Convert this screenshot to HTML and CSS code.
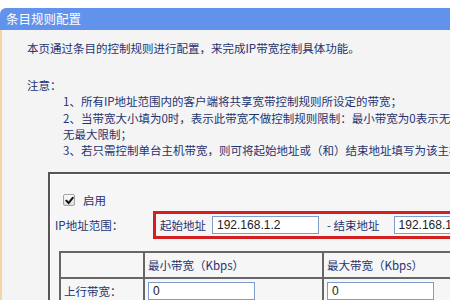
FILE: index.html
```html
<!DOCTYPE html>
<html>
    <head>
        <meta charset="utf-8">
        <meta name="viewport" content="width=device-width, initial-scale=1">
        <link rel="stylesheet" href="styles.css">
    </head>
    <body>
        <div class="panel">
            <div class="titulo">条目规则配置</div>
            <div class="contenido">
                <p class="intro">本页通过条目的控制规则进行配置，来完成IP带宽控制具体功能。</p>
                <p class="notaTitulo">注意：</p>
                <div class="notas">
                    <div>1、所有IP地址范围内的客户端将共享宽带控制规则所设定的带宽；</div>
                    <div>2、当带宽大小填为0时，表示此带宽不做控制规则限制：最小带宽为0表示无最小限制，最大带宽为0表示</div>
                    <div>无最大限制；</div>
                    <div>3、若只需控制单台主机带宽，则可将起始地址或（和）结束地址填写为该主机IP地址。</div>
                </div>

                <div class="caja">
                    <label class="habilitar">
                        <span class="check">
                            <svg width="9" height="9" viewBox="0 0 10 10">
                                <path d="M1.5 5.2 L4 7.8 L8.6 2" />
                            </svg>
                        </span>
                        <span>启用</span>
                    </label>

                    <div class="filaRango">
                        <span class="etiqueta">IP地址范围：</span>
                        <div class="rango">
                            <span>起始地址</span>
                            <input class="campo" type="text" value="192.168.1.2">
                            <span class="guion">- 结束地址</span>
                            <input class="campo" type="text" value="192.168.1.254">
                        </div>
                    </div>

                    <table class="tablaBanda">
                        <colgroup>
                            <col class="colEtiqueta">
                            <col class="colValor">
                            <col class="colValor">
                        </colgroup>
                        <tr class="cabecera">
                            <td></td>
                            <td>最小带宽（Kbps）</td>
                            <td>最大带宽（Kbps）</td>
                        </tr>
                        <tr>
                            <td>上行带宽：</td>
                            <td><input class="campo" type="text" value="0"></td>
                            <td><input class="campo" type="text" value="0"></td>
                        </tr>
                    </table>
                </div>
            </div>
        </div>
    </body>
</html>
```

FILE: styles.css
```css
html,
body {
    height  : 100%;
    margin  : 0;
    overflow: hidden;
    padding : 0;
}

body {
    background-color: #fff;
    color           : #1f3370;
    font-family     : "Noto Sans CJK SC", "Liberation Sans", sans-serif;
    font-size       : 11.5px;
}

.panel {
    margin-top: 8px;
}

.titulo {
    background-color      : #6193ed;
    border-top-left-radius: 6px;
    color                 : #fff;
    font-size             : 12.5px;
    height                : 22px;
    line-height           : 22px;
    padding-left          : 6px;
}

.contenido {
    background-color: #f4f4f4;
    border-left     : 2px solid #f2d6a4;
    height          : 270px;
    overflow        : hidden;
    padding         : 10px 0 0 25px;
    white-space     : nowrap;
}

.intro {
    line-height: 16px;
    margin     : 0 0 21px;
}

.notaTitulo {
    line-height: 16.3px;
    margin     : 0;
}

.notas {
    line-height : 16.3px;
    padding-left: 36px;
}

/* Caja del formulario */
.caja {
    background-color: #f6f6f6;
    border-left     : 2px solid #555;
    border-top      : 2px solid #555;
    box-shadow      : inset 1px 1px 0 #fff;
    margin          : 14px 0 0 21px;
    padding         : 18px 0 12px 5px;
    width           : 440px;
}

.habilitar {
    align-items: center;
    display    : flex;
    gap        : 8px;
    height     : 16px;
    margin-left: 8px;
}

.check {
    align-items     : center;
    background      : linear-gradient( #fdfdfd, #dcdcdc );
    border          : 1px solid #a3a3a3;
    border-radius   : 2px;
    box-sizing      : border-box;
    display         : flex;
    height          : 12px;
    justify-content : center;
    width           : 12px;
}

.check path {
    fill           : none;
    stroke         : #111;
    stroke-linecap : round;
    stroke-width   : 2.2;
}

.filaRango {
    align-items: center;
    display    : flex;
    margin-top : 3px;
}

.etiqueta {
    flex  : 0 0 auto;
    width : 98px;
}

.rango {
    align-items : center;
    border      : 3px solid #d41f1f;
    display     : flex;
    flex        : 0 0 auto;
    height      : 22px;
    padding-left: 4px;
}

.rango > span {
    margin-right: 6px;
}

.rango .guion {
    margin-left : 8px;
    margin-right: 14px;
}

.campo {
    background-color: #fff;
    border          : 1px solid #7f9ccb;
    box-sizing      : border-box;
    color           : #222;
    font-family     : "Liberation Sans", sans-serif;
    font-size       : 12px;
    height          : 18px;
    margin          : 0;
    padding         : 0 4px;
    width           : 107px;
}

/* Tabla de anchos de banda */
.tablaBanda {
    border-collapse: collapse;
    margin         : 12px 0 0 4px;
    table-layout   : fixed;
    width          : 442px;
}

.colEtiqueta {
    width: 84px;
}

.colValor {
    width: 179px;
}

.tablaBanda td {
    border     : 2px solid #666;
    height     : 22px;
    padding    : 1px 3px;
}
```
